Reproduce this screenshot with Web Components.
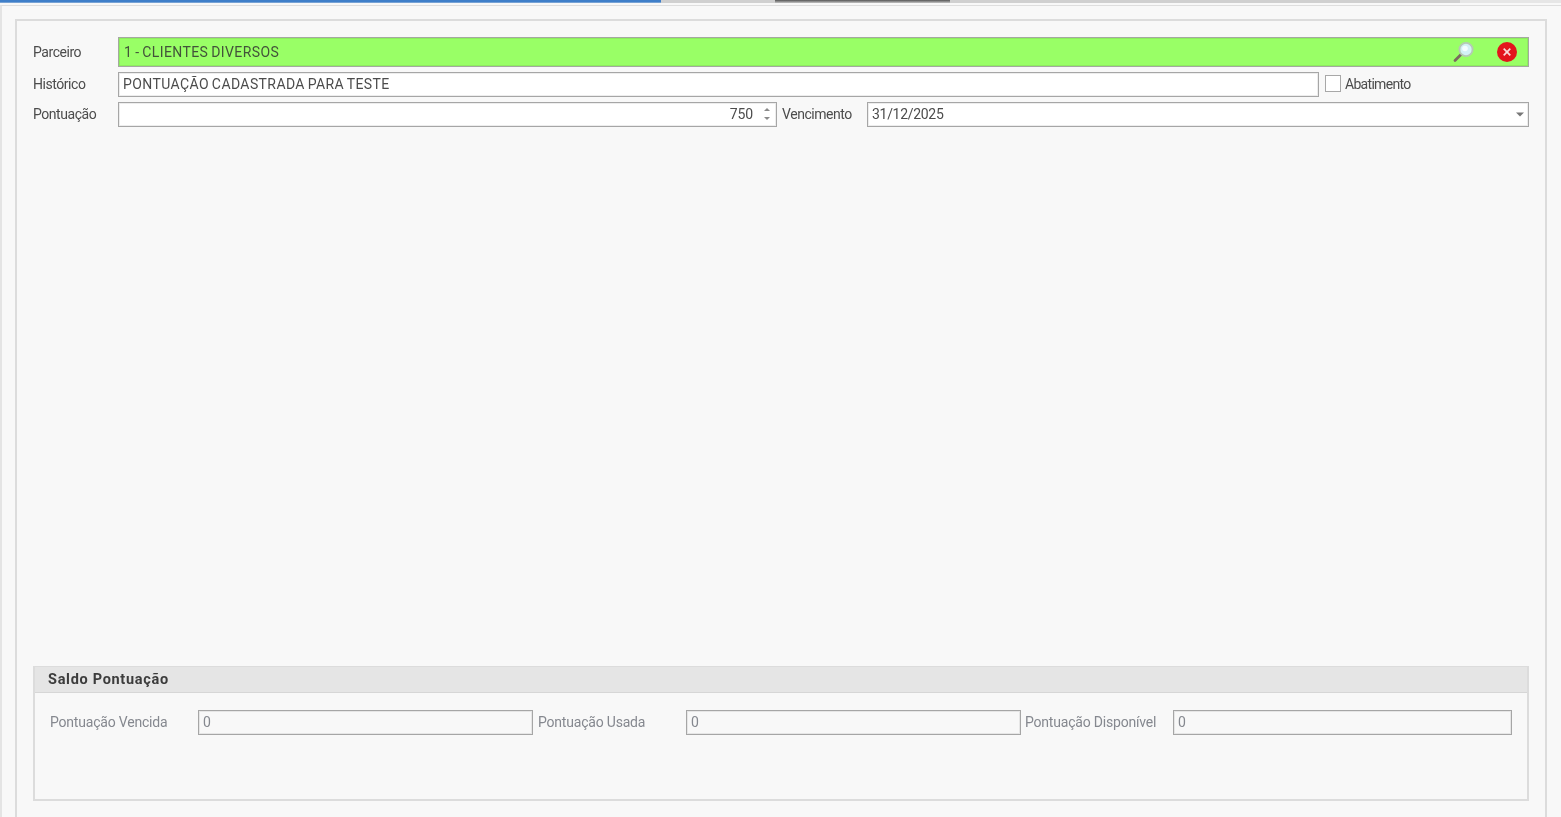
<!DOCTYPE html>
<html lang="pt">
<head>
<meta charset="utf-8">
<title>Pontuação</title>
<style>
  html, body { margin: 0; height: 100%; background: #f8f8f8; }
  body { font: 14px Roboto, "Liberation Sans", sans-serif; color: #4c4c4c; overflow: hidden; }
</style>
</head>
<body>
<template id="tpl-window">
  <style>
    :host { display: flex; flex-direction: column; height: 817px; box-sizing: border-box; filter: blur(.35px); }
    .strip { display: flex; height: 3px; flex: none; background: #d0d0d0; }
    .strip .blue { width: 661px; background: linear-gradient(#3f7fc9 65%, #a9c2df); }
    .strip .gap { width: 114px; }
    .strip .dark { width: 175px; background: linear-gradient(#555, #c4c4c4); }
    .strip .mid { width: 510px; }
    .strip .light { flex: 1; background: #e6e6e6; }
    .frame { flex: 1; margin-top: 2px; border-top: 1px solid #dedede; border-left: 2px solid #e4e4e4; padding: 13px 14px 0 13px; display: flex; min-height: 0; }
    .panel { flex: 1; border: solid #dcdcdc; border-width: 2px 2px 0; padding: 16px 16px 16px 16px; display: flex; flex-direction: column; }
    .grow { flex: 1; }
  </style>
  <div class="strip"><div class="blue"></div><div class="gap"></div><div class="dark"></div><div class="mid"></div><div class="light"></div></div>
  <div class="frame"><div class="panel"><slot name="form"></slot><div class="grow"></div><slot name="group"></slot></div></div>
</template>

<template id="tpl-row">
  <style>
    :host { display: flex; align-items: center; height: var(--h, 25px); margin-bottom: var(--mb, 5px); }
  </style>
  <slot></slot>
</template>

<template id="tpl-label">
  <style>
    :host { display: block; flex: none; box-sizing: border-box; white-space: nowrap; letter-spacing: var(--ls, -.45px); color: var(--c, #4c4c4c); margin-top: var(--up, 0); }
  </style>
  <slot></slot>
</template>

<template id="tpl-input">
  <style>
    :host { display: flex; align-items: center; box-sizing: border-box; height: 25px; flex: none; background: var(--bg, #fff); border: 1px solid #a6a6a6; box-shadow: inset 0 0 0 1px rgba(0,0,0,.07); padding: 0 4px 1px; color: var(--c, #4c4c4c); white-space: nowrap; letter-spacing: var(--ls, -.12px); word-spacing: var(--ws, 0); }
    .t { flex: 1; }
    :host([align=right]) .t { text-align: right; }
    ::slotted(svg) { flex: none; }
  </style>
  <span class="t" part="text"><slot></slot></span>
  <slot name="end"></slot>
</template>

<template id="tpl-group">
  <style>
    :host { display: block; height: 135px; box-sizing: border-box; border: 2px solid #dcdcdc; border-top-width: 1px; }
    .head { height: 26px; box-sizing: border-box; background: #e5e5e5; border-bottom: 1px solid #d6d6d6; padding-left: 13px; display: flex; align-items: center; font-weight: 700; font-size: 14.5px; letter-spacing: .7px; color: #3c3c3c; }
    .body { display: flex; padding: 17px 0 0 15px; }
  </style>
  <div class="head"><slot name="title"></slot></div>
  <div class="body"><slot></slot></div>
</template>

<template id="tpl-check">
  <style>
    :host { display: flex; align-items: center; margin-top: -2px; }
    .box { width: 16px; height: 17px; box-sizing: border-box; background: #fff; border: 1px solid #a8a8a8; margin-right: 4px; }
    span { letter-spacing: -.7px; }
  </style>
  <div class="box"></div><span><slot></slot></span>
</template>

<erp-window>
  <div slot="form">
    <erp-row style="--h:30px">
      <erp-label style="width:85px">Parceiro</erp-label>
      <erp-input style="width:1411px;height:30px;--bg:#99ff66;--c:#43533a;--ls:.4px;--ws:-1px;padding-left:5px;padding-right:11px;padding-bottom:0;border-color:#a4a9a0">1 - CLIENTES DIVERSOS
        <svg slot="end" width="22" height="22" viewBox="0 0 22 22">
          <line x1="3" y1="19.5" x2="9" y2="13.5" stroke="#7a6a5e" stroke-width="2.8" stroke-linecap="round"/>
          <circle cx="14" cy="8.5" r="6.6" fill="#d3f1f6" stroke="#b5c9b5" stroke-width="1.9"/>
          <circle cx="13" cy="7.5" r="2.8" fill="#f4feff"/>
        </svg>
        <svg slot="end" width="20" height="20" viewBox="0 0 20 20" style="margin-left:23px">
          <circle cx="10" cy="10" r="10" fill="#e3141c"/>
          <path d="M6.7 6.7l6.6 6.6M13.3 6.7l-6.6 6.6" stroke="#fbd9d9" stroke-width="1.7"/>
        </svg>
      </erp-input>
    </erp-row>
    <erp-row>
      <erp-label style="width:85px;--up:-2px">Histórico</erp-label>
      <erp-input style="width:1201px;--ls:.4px;--ws:-1px">PONTUAÇÃO CADASTRADA PARA TESTE</erp-input>
      <erp-check style="margin-left:6px">Abatimento</erp-check>
    </erp-row>
    <erp-row>
      <erp-label style="width:85px;--up:-2px">Pontuação</erp-label>
      <erp-input align="right" style="width:659px">750
        <svg slot="end" width="10" height="18" viewBox="0 0 10 18" style="margin-left:9px">
          <path d="M2 6l3-3 3 3z" fill="#8a8a8a"/><path d="M2 12l3 3 3-3z" fill="#8a8a8a"/>
        </svg>
      </erp-input>
      <erp-label style="width:90px;padding-left:5px;--up:-2px">Vencimento</erp-label>
      <erp-input style="width:662px;--ls:-.3px">31/12/2025
        <svg slot="end" width="8" height="5" viewBox="0 0 8 5"><path d="M0 .5h8L4 4.5z" fill="#777"/></svg>
      </erp-input>
    </erp-row>
  </div>
  <erp-group slot="group">
    <span slot="title">Saldo Pontuação</span>
    <erp-label style="width:148px;line-height:25px;--ls:-.2px;--c:#85888f">Pontuação Vencida</erp-label>
    <erp-input style="width:335px;--bg:#f8f8f8;--c:#85888f">0</erp-input>
    <erp-label style="width:148px;line-height:25px;margin-left:5px;--ls:-.2px;--c:#85888f">Pontuação Usada</erp-label>
    <erp-input style="width:335px;--bg:#f8f8f8;--c:#85888f">0</erp-input>
    <erp-label style="width:148px;line-height:25px;margin-left:4px;--ls:-.2px;--c:#85888f">Pontuação Disponível</erp-label>
    <erp-input style="width:339px;--bg:#f8f8f8;--c:#85888f">0</erp-input>
  </erp-group>
</erp-window>

<script>
  // each tag just stamps its own template into an open shadow root
  const tags = {
    'erp-window': 'tpl-window',
    'erp-row': 'tpl-row',
    'erp-label': 'tpl-label',
    'erp-input': 'tpl-input',
    'erp-group': 'tpl-group',
    'erp-check': 'tpl-check'
  };
  Object.keys(tags).forEach(name => {
    customElements.define(name, class extends HTMLElement {
      connectedCallback() {
        if (this.shadowRoot) return;
        const root = this.attachShadow({ mode: 'open' });
        root.appendChild(document.getElementById(tags[name]).content.cloneNode(true));
      }
    });
  });
</script>
</body>
</html>
